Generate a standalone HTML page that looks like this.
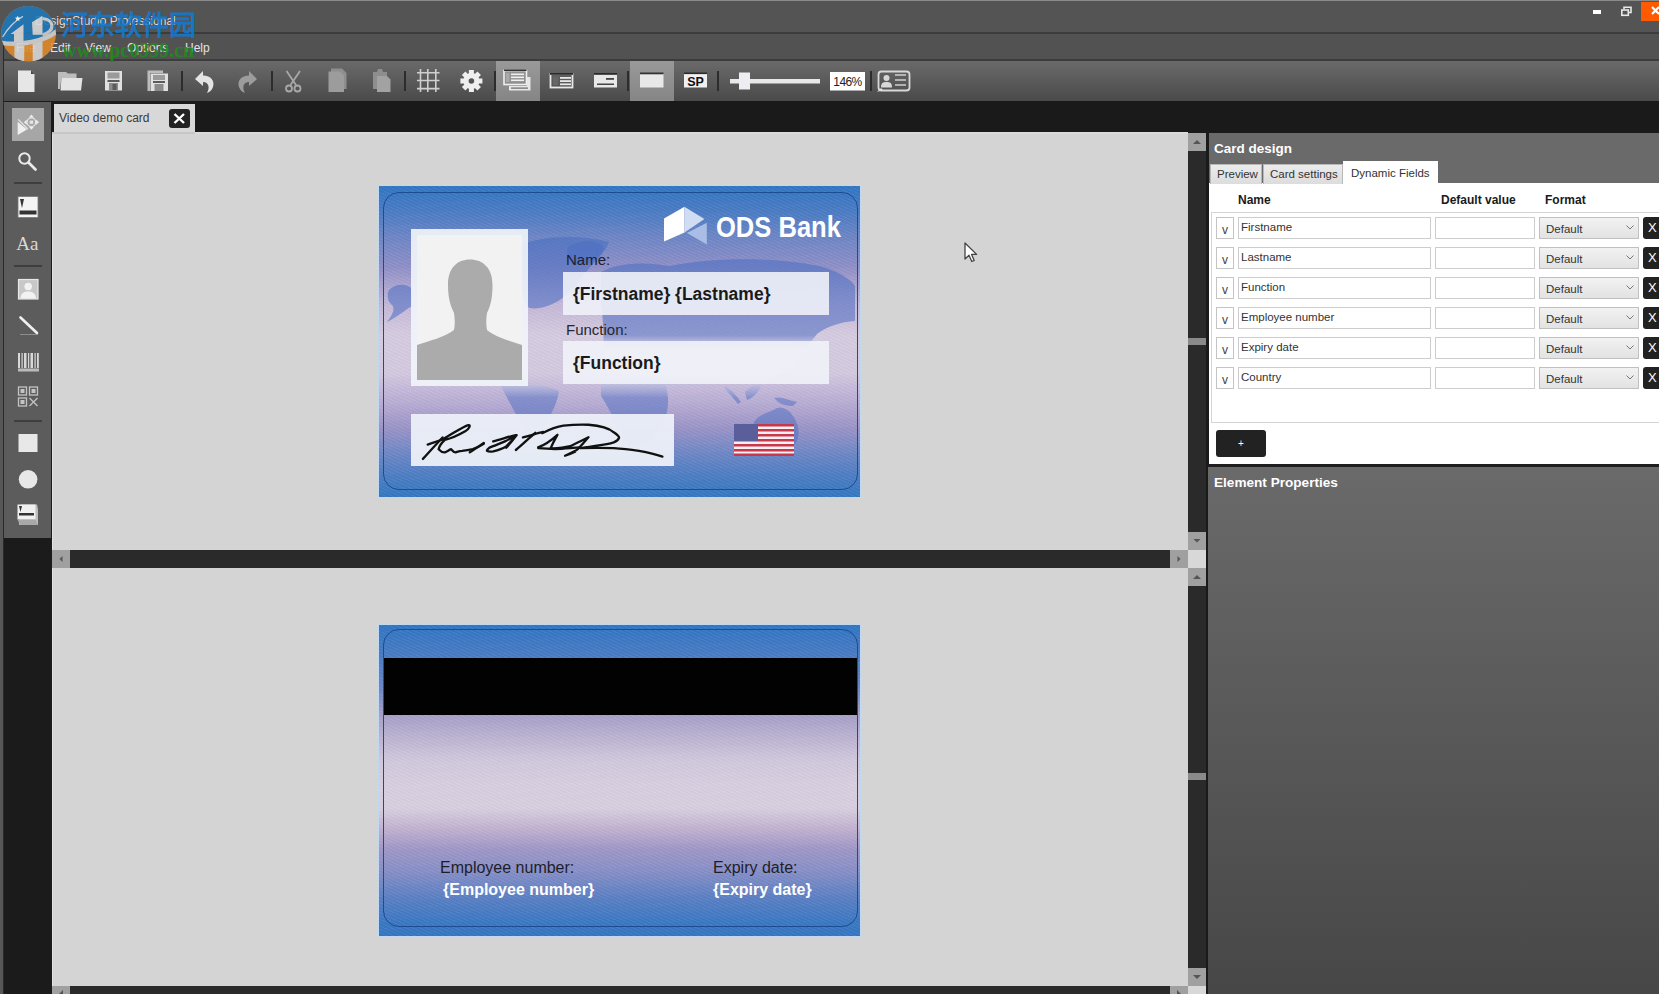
<!DOCTYPE html>
<html><head><meta charset="utf-8">
<style>
*{margin:0;padding:0;box-sizing:border-box}
html,body{width:1659px;height:994px;overflow:hidden;background:#1b1b1b;font-family:"Liberation Sans",sans-serif}
.a{position:absolute}
svg{position:absolute;overflow:visible}
#title{left:0;top:0;width:1659px;height:32px;background:#545454;border-top:1px solid #8a8a8a}
#menu{left:0;top:32px;width:1659px;height:29px;background:#525252;border-top:2px solid #3c3c3c;border-bottom:2px solid #3c3c3c}
#tb{left:0;top:61px;width:1659px;height:40px;background:linear-gradient(#6a6a6a,#4a4a4a)}
#tabs{left:0;top:101px;width:1659px;height:31px;background:#1a1a1a}
#lstrip{left:0;top:32px;width:3px;height:962px;background:#575757}
#ldark{left:3px;top:32px;width:1px;height:962px;background:#2a2a2a}
#tools{left:4px;top:102px;width:47px;height:436px;background:#5c5c5c}
.canvas{left:52px;width:1136px;background:#d4d4d4;border-left:1px solid #e2e2e2}
#canvas1{top:132px;height:418px;border-top:2px solid #dadada}
#canvas2{top:568px;height:418px}
#rp{left:1206px;top:133px;width:453px;height:861px;background:#1a1a1a}
.menuitem{top:40.7px;font-size:12px;color:#e4e4e4}
.sep{width:2px;height:20px;top:71px;background:#2c2c2c}
.sel{top:61px;height:40px;background:linear-gradient(#999,#858585)}
.hs{left:52px;width:1136px;height:19px;background:#2a2a2a}
.vs{left:1188px;width:18px;background:#2a2a2a}
.sbtn{background:#a0a0a0}
.tool{left:18px;width:20px;height:20px}
.tsep{left:14px;width:28px;height:2px;background:#3e3e3e}
</style></head><body>
<div id="title" class="a"></div>
<div id="menu" class="a"></div>
<div id="tb" class="a"></div>
<div id="tabs" class="a"></div>
<div id="lstrip" class="a"></div>
<div id="ldark" class="a"></div>
<div id="tools" class="a"></div>
<div id="canvas1" class="a canvas"></div>
<div id="canvas2" class="a canvas"></div>
<div id="rp" class="a"></div>

<!-- scrollbars -->
<div class="a hs" style="top:550px;height:18px"></div>
<div class="a sbtn" style="left:52px;top:550px;width:18px;height:18px"></div>
<div class="a sbtn" style="left:1170px;top:550px;width:18px;height:18px"></div>
<div class="a hs" style="top:986px;height:8px"></div>
<div class="a sbtn" style="left:52px;top:986px;width:18px;height:8px"></div>
<div class="a sbtn" style="left:1170px;top:986px;width:18px;height:8px"></div>
<div class="a" style="left:1188px;top:550px;width:18px;height:18px;background:#d8d8d8"></div>
<div class="a vs" style="top:133px;height:417px"></div>
<div class="a sbtn" style="left:1188px;top:133px;width:18px;height:18px"></div>
<div class="a sbtn" style="left:1188px;top:532px;width:18px;height:18px"></div>
<div class="a" style="left:1188px;top:338px;width:18px;height:7px;background:#8a8a8a"></div>
<div class="a vs" style="top:568px;height:418px"></div>
<div class="a sbtn" style="left:1188px;top:568px;width:18px;height:18px"></div>
<div class="a sbtn" style="left:1188px;top:968px;width:18px;height:18px"></div>
<div class="a" style="left:1188px;top:773px;width:18px;height:7px;background:#8a8a8a"></div>
<div class="a" style="left:1188px;top:986px;width:18px;height:8px;background:#d8d8d8"></div>
<svg style="left:0;top:0" width="1659" height="994">
 <g fill="#555">
  <path d="M1193 144 l4 -4 l4 4z"/>
  <path d="M1193.5 539 l3.5 3.5 l3.5 -3.5z"/>
  <path d="M1193 579 l4 -4 l4 4z"/>
  <path d="M1193 975 l4 4 l4 -4z"/>
  <path d="M62.5 556 l-3 3 l3 3z"/>
  <path d="M1177.5 556 l3 3 l-3 3z"/>
  <path d="M63 990 l-4 4 l4 4z"/>
  <path d="M1177 990 l4 4 l-4 4z"/>
 </g>
</svg>

<!-- menu -->
<div class="a menuitem" style="left:16px">File</div>
<div class="a menuitem" style="left:50px">Edit</div>
<div class="a menuitem" style="left:85px">View</div>
<div class="a menuitem" style="left:127px">Options</div>
<div class="a menuitem" style="left:185px">Help</div>

<!-- window controls -->
<div class="a" style="left:1593px;top:10px;width:8px;height:4px;background:#fff"></div>
<div class="a" style="left:1641px;top:2px;width:18px;height:19px;background:#ff5a00"></div>

<!-- toolbar separators / selected -->
<div class="a sel" style="left:496px;width:44px"></div>
<div class="a sel" style="left:630px;width:44px"></div>
<div class="a sep" style="left:181px"></div>
<div class="a sep" style="left:271px"></div>
<div class="a sep" style="left:404px"></div>
<div class="a sep" style="left:494px"></div>
<div class="a sep" style="left:627px"></div>
<div class="a sep" style="left:717px"></div>
<div class="a sep" style="left:870px"></div>

<!-- tab -->
<div class="a" style="left:54px;top:104px;width:141px;height:28px;background:#d8d8d8"></div>
<div class="a" style="left:52px;top:131.5px;width:143px;height:2.5px;background:#c6c6c6"></div>
<div class="a" style="left:59px;top:111px;font-size:12px;color:#3a3a3a">Video demo card</div>
<div class="a" style="left:169px;top:109px;width:21px;height:19px;background:#222;border-radius:3px"></div>

<!-- tool panel -->
<div class="a" style="left:12px;top:108px;width:32px;height:33px;background:#a6a6a6"></div>
<div class="a tsep" style="top:182px"></div>
<div class="a tsep" style="top:265px"></div>
<div class="a tsep" style="top:420px"></div>

<!-- right panel -->
<div class="a" style="left:1209px;top:133px;width:450px;height:50px;background:#6a6a6a"></div>
<div class="a" style="left:1214px;top:141px;font-size:13.5px;font-weight:bold;color:#fff">Card design</div>
<div class="a" style="left:1209px;top:183px;width:450px;height:281px;background:#fff"></div>
<div class="a" style="left:1208px;top:467px;width:451px;height:527px;background:linear-gradient(#6a6a6a,#474747)"></div>
<div class="a" style="left:1214px;top:475px;font-size:13.6px;font-weight:bold;color:#fff">Element Properties</div>





<!-- title text -->
<div class="a" style="left:35px;top:14px;font-size:12px;color:#dedede;white-space:nowrap">DesignStudio Professional</div>
<!-- watermark -->
<div lang="zh-CN" class="a" style="left:61px;top:3.5px;font-family:'Liberation Serif',serif;font-size:27px;font-weight:bold;color:rgba(20,120,205,0.92);white-space:nowrap;letter-spacing:0px">河东软件园</div>
<div class="a" style="left:62px;top:39px;font-family:'Liberation Serif',serif;font-size:20px;font-weight:bold;color:rgba(30,140,30,0.9);white-space:nowrap">www.pc0359.cn</div>
<svg style="left:0;top:0;opacity:0.9" width="60" height="64" viewBox="0 0 60 64">
 <defs><clipPath id="cc"><ellipse cx="28.6" cy="33.7" rx="27.4" ry="27.8"/></clipPath></defs>
 <g clip-path="url(#cc)">
  <rect x="0" y="0" width="60" height="64" fill="#e08a2a"/>
  <rect x="14.4" y="42" width="9.8" height="22" fill="#d6d6d6"/>
  <rect x="32.7" y="40" width="9.8" height="24" fill="#d6d6d6"/>
  <path d="M0 0 H60 V30.7 C45.8 40.5 19.6 45.8 0 41.9 Z" fill="#1e77b8"/>
  <path d="M0 42.5 C19.6 46.4 45.8 41 57 31" fill="none" stroke="#d2d2d2" stroke-width="4.5"/>
  <path d="M2.6 37 C8 28 16 20 23 16.3" fill="none" stroke="#c8d8e8" stroke-width="1.4"/>
  <path d="M10.5 34 L23.5 24.2 L23.5 41.9 L14 41.9 L14 34 Z" fill="#d8d8d8"/>
  <path d="M32 22.2 L42.5 15.7 L42.5 34.7 L32.7 34.7 Z" fill="#d8d8d8"/>
  <path d="M42.5 18.5 C55 19.8 55 31.5 42.5 34.7" fill="none" stroke="#cfcfcf" stroke-width="3.2"/>
  <path d="M17.7 15.8 l0.8 1.8 l2 0.2 l-1.5 1.3 l0.5 2 l-1.8 -1.1 l-1.8 1.1 l0.5 -2 l-1.5 -1.3 l2 -0.2z" fill="#fff"/>
 </g>
</svg>

<!-- toolbar icons -->
<svg style="left:0;top:0" width="1000" height="100">
 <!-- new -->
 <path d="M18 70.5 L31 70.5 L34.5 74 L34.5 92 L18 92z" fill="#e6e6e6"/>
 <path d="M31 70.5 L34.5 74 L31 74z" fill="#444"/>
 <!-- open -->
 <path d="M58 72 L66 72 L68 73.5 L76.5 73.5 L76.5 78 L61.5 78 L60 89 L58 89z" fill="#bdbdbd"/>
 <path d="M61.5 78 L82.5 78 L81 90.5 L60.5 90.5z" fill="#e4e4e4"/>
 <!-- save -->
 <path d="M105 71 L122 71 L122 90.5 L105 90.5z" fill="#e0e0e0"/>
 <rect x="107.5" y="72.5" width="12" height="6" fill="#9a9a9a"/>
 <rect x="107.5" y="80" width="12" height="2" fill="#5a5a5a"/>
 <rect x="109" y="83" width="9" height="7.5" fill="#8a8a8a"/>
 <rect x="112.5" y="84" width="4" height="6" fill="#5a5a5a"/>
 <!-- save all -->
 <path d="M147.5 70.5 L163 70.5 L163 73 L150 73 L150 91 L147.5 91z" fill="#bdbdbd"/>
 <path d="M150.5 73.5 L168 73.5 L168 91 L150.5 91z" fill="#e0e0e0"/>
 <rect x="153" y="75" width="12" height="5" fill="#9a9a9a"/>
 <rect x="153" y="81" width="12" height="2" fill="#5a5a5a"/>
 <rect x="154.5" y="84" width="9" height="7" fill="#8a8a8a"/>
 <!-- undo -->
 <path d="M195 79 L203 71 L203 75.5 C211 75.5 215 81 213 87 C212 90 210 92 207 93 C210 88 209 82 203 82 L203 86z" fill="#e4e4e4"/>
 <!-- redo -->
 <path d="M257 79 L249 71 L249 75.5 C241 75.5 237 81 239 87 C240 90 242 92 245 93 C242 88 243 82 249 82 L249 86z" fill="#9c9c9c"/>
 <!-- cut -->
 <g stroke="#a8a8a8" stroke-width="1.8" fill="none">
  <path d="M286.5 71 L296 85 M300 71 L290.5 85"/>
  <circle cx="289" cy="88.5" r="3"/>
  <circle cx="297.5" cy="88.5" r="3"/>
 </g>
 <!-- copy -->
 <path d="M331 68.5 L342 68.5 L346.5 73 L346.5 89 L331 89z" fill="#8e8e8e"/>
 <path d="M328.5 71.5 L340 71.5 L344 75.5 L344 92 L328.5 92z" fill="#9c9c9c"/>
 <!-- paste -->
 <path d="M373 72 L377 72 L378 69 L382 69 L383 72 L387 72 L387 89 L373 89z" fill="#8e8e8e"/>
 <path d="M377 76 L387 76 L390.5 79.5 L390.5 92 L377 92z" fill="#a2a2a2"/>
 <!-- grid -->
 <g stroke="#cfcfcf" stroke-width="1.6">
  <path d="M417 72.8 L439.5 72.8 M417 80.5 L439.5 80.5 M417 88.6 L439.5 88.6"/>
  <path d="M420.5 69 L420.5 92 M427.8 69 L427.8 92 M435.8 69 L435.8 92"/>
 </g>
 <!-- gear -->
 <g transform="translate(471.4 81)" fill="#efefef">
  <circle r="8"/>
  <g id="teeth"><rect x="-2.5" y="-11" width="5" height="22"/><rect x="-2.5" y="-11" width="5" height="22" transform="rotate(45)"/><rect x="-2.5" y="-11" width="5" height="22" transform="rotate(90)"/><rect x="-2.5" y="-11" width="5" height="22" transform="rotate(135)"/></g>
  <circle r="2.8" fill="#555"/>
 </g>
 <!-- layout icon 1 (selected) -->
 <rect x="504" y="70.5" width="22.5" height="14" fill="none" stroke="#efefef" stroke-width="1.6"/>
 <rect x="504" y="69.5" width="22.5" height="1.5" fill="#333"/>
 <rect x="506" y="73" width="3.5" height="9" fill="#aaa"/>
 <g fill="#efefef"><rect x="511" y="73.5" width="13" height="1.6"/><rect x="511" y="76.5" width="13" height="1.6"/><rect x="511" y="79.5" width="13" height="1.6"/></g>
 <path d="M509 86 L530.5 86 L530.5 90.5 L509 90.5z" fill="#e6e6e6"/>
 <rect x="511" y="87.5" width="17" height="1.2" fill="#666"/>
 <rect x="527" y="77" width="3.5" height="9" fill="#e6e6e6"/>
 <!-- layout icon 2 -->
 <rect x="550.5" y="74" width="22" height="13.5" fill="none" stroke="#e8e8e8" stroke-width="1.8"/>
 <rect x="550" y="73" width="23" height="1.8" fill="#2a2a2a"/>
 <rect x="553" y="77" width="5" height="8" fill="#666"/>
 <g fill="#e8e8e8"><rect x="560" y="77" width="11" height="1.8"/><rect x="560" y="80.2" width="11" height="1.8"/><rect x="560" y="83.4" width="11" height="1.8"/></g>
 <!-- layout icon 3 -->
 <rect x="594" y="74" width="23" height="13.5" fill="#e8e8e8"/>
 <rect x="594" y="73" width="23" height="1.8" fill="#2a2a2a"/>
 <rect x="606" y="78" width="8" height="1.8" fill="#444"/>
 <rect x="597" y="83.5" width="17" height="1.5" fill="#444"/>
 <!-- layout icon 4 (selected) -->
 <rect x="640" y="73.5" width="23.5" height="14" fill="#e8e8e8"/>
 <rect x="640" y="72.5" width="23.5" height="1.8" fill="#333"/>
 <!-- SP -->
 <rect x="684" y="73.5" width="23" height="14" fill="#f0f0f0"/>
 <rect x="684" y="72.5" width="23" height="1.6" fill="#2a2a2a"/>
 <text x="695.5" y="86" font-family="Liberation Sans" font-weight="bold" font-size="12.5" fill="#111" text-anchor="middle">SP</text>
 <!-- slider -->
 <rect x="730" y="79" width="90" height="4.5" fill="#e8e8e8"/>
 <rect x="739" y="72.5" width="11" height="17" fill="#ededf2"/>
 <!-- zoom box -->
 <rect x="830" y="72" width="35" height="18.5" fill="#fff"/>
 <text x="847.5" y="86.2" font-family="Liberation Sans" font-size="12" fill="#222" text-anchor="middle" letter-spacing="-0.6">146%</text>
 <!-- last icon -->
 <rect x="878.5" y="71.5" width="31" height="19" rx="3" fill="none" stroke="#d8d8d8" stroke-width="1.8"/>
 <circle cx="886.5" cy="78" r="3" fill="#d8d8d8"/>
 <path d="M881 87.5 C881 83 883 82 886.5 82 C890 82 892 83 892 87.5z" fill="#d8d8d8"/>
 <g stroke="#cfcfcf" stroke-width="1.5"><path d="M895 75 L906 75 M895 80 L906 80 M895 85 L906 85"/></g>
 <path d="M877 92 L881 88 L883 90z" fill="#e0e0e0"/>
 <!-- window restore -->
 <g fill="none" stroke="#e8e8e8" stroke-width="1.6"><rect x="1621.8" y="10" width="6.5" height="5.3"/><path d="M1624 9 L1624 7.2 L1631 7.2 L1631 12.5 L1629 12.5"/></g>
 <!-- close X -->
 <path d="M1652 7 L1659 14 M1659 7 L1652 14" stroke="#fff" stroke-width="2.2"/>
 <!-- tab close X -->
 <path d="M174.5 114 L184 123 M184 114 L174.5 123" stroke="#fff" stroke-width="2.4"/>
</svg>

<!-- left tool icons -->
<svg style="left:0;top:0" width="60" height="540">
 <!-- select tool -->
 <path d="M17.7 121.8 L17.7 135.1 L27 129.4z" fill="#f0f0f0"/>
 <path d="M18.1 119.4 L27.8 129" stroke="#e8e8e8" stroke-width="1.2"/>
 <g fill="#ececec">
  <path d="M31.4 114.6 L34 117.6 L28.8 117.6z"/>
  <path d="M31.4 129.8 L34 126.8 L28.8 126.8z"/>
  <path d="M23.8 122.2 L26.8 119.6 L26.8 124.8z"/>
  <path d="M39 122.2 L36 119.6 L36 124.8z"/>
 </g>
 <circle cx="31.4" cy="122.2" r="4.3" fill="none" stroke="#e6e6e6" stroke-width="1.2"/>
 <rect x="29.6" y="120.6" width="3.6" height="3.2" fill="#e6e6e6"/>
 <!-- zoom -->
 <circle cx="24.5" cy="158.5" r="5.2" fill="none" stroke="#eaeaea" stroke-width="2"/>
 <path d="M28.5 162.5 L35.5 169.5" stroke="#eaeaea" stroke-width="2.8" stroke-linecap="round"/>
 <!-- image icon -->
 <rect x="18" y="196.5" width="20" height="21" fill="#f4f4f4" stroke="#777" stroke-width="0.8"/>
 <path d="M20 199 L24 199 L22 208z" fill="#333"/>
 <rect x="19.5" y="210.5" width="17" height="4" fill="#333"/>
 <!-- Aa -->
 <text x="16.3" y="250.4" font-family="Liberation Serif" font-size="19" fill="#d8d8d8">Aa</text>
 <!-- person -->
 <rect x="18.5" y="279.5" width="19.5" height="19.5" fill="#c8c8c8" stroke="#e8e8e8" stroke-width="1.2"/>
 <circle cx="28.2" cy="286.5" r="3.8" fill="#f2f2f2"/>
 <path d="M20.5 298.5 C21 293 24 291.5 28.2 291.5 C32.5 291.5 35.5 293 36 298.5z" fill="#f2f2f2"/>
 <!-- line -->
 <path d="M20.5 317.5 L37 333" stroke="#f0f0f0" stroke-width="2.6" stroke-linecap="round"/>
 <path d="M20 334.5 L38 334.5" stroke="#9a9a9a" stroke-width="0.8"/>
 <!-- barcode -->
 <g fill="#d8d8d8"><rect x="18" y="353" width="2" height="15"/><rect x="21.5" y="353" width="1.2" height="15"/><rect x="24" y="353" width="2.5" height="15"/><rect x="28" y="353" width="1.2" height="15"/><rect x="30.5" y="353" width="2.5" height="15"/><rect x="34.5" y="353" width="1.2" height="15"/><rect x="37" y="353" width="1.8" height="15"/></g>
 <rect x="18" y="368.5" width="21" height="3" fill="#bbb"/>
 <!-- QR -->
 <g fill="none" stroke="#c4c4c4" stroke-width="1.3"><rect x="18.5" y="387" width="8" height="8"/><rect x="29.5" y="387" width="8" height="8"/><rect x="18.5" y="398" width="8" height="8"/><path d="M29.5 398 L37.5 406 M37.5 398 L29.5 406"/></g>
 <g fill="#c4c4c4"><rect x="20.5" y="389" width="4" height="4"/><rect x="31.5" y="389" width="4" height="4"/><rect x="20.5" y="400" width="4" height="4"/></g>
 <!-- square -->
 <rect x="18.5" y="434" width="19" height="18" fill="#e8e8e8"/>
 <!-- circle -->
 <circle cx="28.1" cy="479.3" r="9.3" fill="#e8e8e8"/>
 <!-- stacked image -->
 <path d="M19 509 L21 504.5 L37 504.5 L38 509 L38 525 L19 525z" fill="#bdbdbd"/>
 <rect x="17.5" y="504.5" width="18" height="15" fill="#f0f0f0"/>
 <path d="M19 506 L22 506 L20.5 512z" fill="#333"/>
 <rect x="19" y="513" width="15" height="2.5" fill="#333"/>
 <path d="M17.5 519.5 L35.5 519.5 L38 525 L20 525z" fill="#a8a8a8"/>
</svg>

<!-- right panel content -->
<style>
.rtab{top:164px;height:20px;background:linear-gradient(#ececec,#dcdcdc);border:1px solid #b8b8b8;border-bottom:none;font-size:11.5px;color:#333;padding:3.3px 0 0 6px;white-space:nowrap}
.hdr{top:193px;font-size:12px;font-weight:bold;color:#1a1a1a}
.vbox{left:1216px;width:18px;height:22px;border:1.5px solid #c4c4c4;background:#fff;font-size:12px;color:#444;text-align:center;line-height:22px;padding-top:1px}
.inp{height:22px;border:1.5px solid #cdcdcd;background:#fff;font-size:11.5px;color:#333;white-space:nowrap}
.inp span{position:absolute;left:2px;top:3px}
.dd{left:1539px;width:100px;height:22px;border:1px solid #c0c0c0;background:linear-gradient(#f2f2f2,#e2e2e2);font-size:11.5px;color:#333}
.dd span{position:absolute;left:6px;top:5px}
.xb{left:1643px;width:20px;height:22px;background:#222;border-radius:3px;color:#fff;font-size:13px;padding-left:5px;line-height:22px}
</style>
<div class="a rtab" style="left:1210px;width:52px">Preview</div>
<div class="a rtab" style="left:1263px;width:80px">Card settings</div>
<div class="a" style="left:1343px;top:161px;width:95px;height:23px;background:#fff;font-size:11.5px;color:#333;padding:6px 0 0 8px;white-space:nowrap">Dynamic Fields</div>
<div class="a hdr" style="left:1238px">Name</div>
<div class="a hdr" style="left:1441px">Default value</div>
<div class="a hdr" style="left:1545px">Format</div>
<div class="a" style="left:1211px;top:212px;width:460px;height:211px;border:1.5px solid #d4d4d4"></div>
<div class="a vbox" style="top:217px">v</div>
<div class="a inp" style="left:1238px;top:217px;width:193px"><span>Firstname</span></div>
<div class="a inp" style="left:1435px;top:217px;width:100px"></div>
<div class="a dd" style="top:217px"><span>Default</span></div>
<svg style="left:1626px;top:225px" width="8" height="5"><path d="M0.5 0.5 L4 4 L7.5 0.5" fill="none" stroke="#777" stroke-width="1"/></svg>
<div class="a xb" style="top:217px">X</div>
<div class="a vbox" style="top:247px">v</div>
<div class="a inp" style="left:1238px;top:247px;width:193px"><span>Lastname</span></div>
<div class="a inp" style="left:1435px;top:247px;width:100px"></div>
<div class="a dd" style="top:247px"><span>Default</span></div>
<svg style="left:1626px;top:255px" width="8" height="5"><path d="M0.5 0.5 L4 4 L7.5 0.5" fill="none" stroke="#777" stroke-width="1"/></svg>
<div class="a xb" style="top:247px">X</div>
<div class="a vbox" style="top:277px">v</div>
<div class="a inp" style="left:1238px;top:277px;width:193px"><span>Function</span></div>
<div class="a inp" style="left:1435px;top:277px;width:100px"></div>
<div class="a dd" style="top:277px"><span>Default</span></div>
<svg style="left:1626px;top:285px" width="8" height="5"><path d="M0.5 0.5 L4 4 L7.5 0.5" fill="none" stroke="#777" stroke-width="1"/></svg>
<div class="a xb" style="top:277px">X</div>
<div class="a vbox" style="top:307px">v</div>
<div class="a inp" style="left:1238px;top:307px;width:193px"><span>Employee number</span></div>
<div class="a inp" style="left:1435px;top:307px;width:100px"></div>
<div class="a dd" style="top:307px"><span>Default</span></div>
<svg style="left:1626px;top:315px" width="8" height="5"><path d="M0.5 0.5 L4 4 L7.5 0.5" fill="none" stroke="#777" stroke-width="1"/></svg>
<div class="a xb" style="top:307px">X</div>
<div class="a vbox" style="top:337px">v</div>
<div class="a inp" style="left:1238px;top:337px;width:193px"><span>Expiry date</span></div>
<div class="a inp" style="left:1435px;top:337px;width:100px"></div>
<div class="a dd" style="top:337px"><span>Default</span></div>
<svg style="left:1626px;top:345px" width="8" height="5"><path d="M0.5 0.5 L4 4 L7.5 0.5" fill="none" stroke="#777" stroke-width="1"/></svg>
<div class="a xb" style="top:337px">X</div>
<div class="a vbox" style="top:367px">v</div>
<div class="a inp" style="left:1238px;top:367px;width:193px"><span>Country</span></div>
<div class="a inp" style="left:1435px;top:367px;width:100px"></div>
<div class="a dd" style="top:367px"><span>Default</span></div>
<svg style="left:1626px;top:375px" width="8" height="5"><path d="M0.5 0.5 L4 4 L7.5 0.5" fill="none" stroke="#777" stroke-width="1"/></svg>
<div class="a xb" style="top:367px">X</div>

<div class="a" style="left:1216px;top:430px;width:50px;height:27px;background:#222;border-radius:3px;color:#fff;font-size:10px;text-align:center;line-height:27px">+</div>
<div class="a" style="left:1208px;top:464px;width:451px;height:3px;background:#1e1e1e"></div>

<!-- FRONT CARD -->
<div class="a" style="left:378px;top:185px;width:483px;height:313px;background:#c0d8f0"></div>
<div class="a" id="front" style="left:379px;top:186px;width:481px;height:311px;overflow:hidden;background:linear-gradient(#3276c4 0%,#4a7cc4 8%,#6c86c6 16%,#9090c8 26%,#c4b8d8 38%,#d6cce0 48%,#d4cae0 60%,#b8acd4 70%,#9a94c8 78%,#6e88c6 86%,#4e7ec4 93%,#3478c2 100%)">
 <div class="a" style="left:0;top:0;width:481px;height:311px;background:repeating-linear-gradient(25deg,rgba(255,255,255,0.05) 0 1px,rgba(0,0,0,0.02) 1px 3px)"></div>
 <svg style="left:0;top:0" width="481" height="311" viewBox="0 0 481 311">
  <defs>
   <linearGradient id="mapg" gradientUnits="userSpaceOnUse" x1="0" y1="0" x2="0" y2="311">
    <stop offset="0" stop-color="#3f6cc0" stop-opacity="0.6"/>
    <stop offset="0.48" stop-color="#5a74c4" stop-opacity="0.6"/>
    <stop offset="0.54" stop-color="#ffffff" stop-opacity="0.35"/>
    <stop offset="0.6" stop-color="#ffffff" stop-opacity="0.3"/>
    <stop offset="0.68" stop-color="#5a74c4" stop-opacity="0.55"/>
    <stop offset="1" stop-color="#3f6cc0" stop-opacity="0.6"/>
   </linearGradient>
  </defs>
  <g fill="url(#mapg)">
   <path d="M10 104 C16 98 26 97 32 102 L33 120 C26 124 20 130 8 136 C14 128 17 122 12 118 C8 114 8 108 10 104Z"/>
   <path d="M140 60 C160 50 200 48 230 56 C225 70 210 80 200 95 C190 110 170 125 150 122 C140 110 138 80 140 60Z"/>
   <path d="M190 60 C205 52 222 55 225 62 C220 75 205 82 195 78 C188 72 186 66 190 60Z"/>
   <path d="M222 86 C240 76 270 76 290 80 C330 72 390 70 440 80 C460 85 474 95 476 100 L476 135 C462 136 448 140 438 148 C428 160 420 175 405 185 C390 195 370 195 350 196 C330 198 300 200 280 198 C260 196 240 190 230 180 C222 165 226 140 222 120 Z"/>
   <path d="M222 196 C240 192 265 192 285 196 C292 210 290 230 280 245 C270 258 258 262 250 260 C240 245 232 225 222 210 Z"/>
   <path d="M122 200 C140 196 165 198 180 205 C178 220 168 238 155 250 C145 245 135 225 122 200Z"/>
   <path d="M347 200 C352 204 358 210 362 216 L359 218 C354 212 349 206 345 202Z M366 206 C372 200 378 197 382 200 C380 206 374 212 368 214Z M395 212 C402 210 410 214 418 216 L414 220 C406 220 400 218 395 212Z"/>
   <path d="M375 236 C380 228 392 226 398 222 C404 220 410 224 414 230 C420 238 422 250 416 258 C408 266 396 264 388 258 C380 256 374 250 375 236Z"/>
  </g>
 </svg>
 <!-- inner rounded border -->
 <div class="a" style="left:4px;top:6px;width:475px;height:298px;border:1.7px solid #1d4c90;border-radius:16px"></div>
 <!-- photo frame -->
 <div class="a" style="left:32px;top:43px;width:117px;height:157px;background:rgba(240,244,250,0.92)"></div>
 <div class="a" style="left:38px;top:49px;width:105px;height:145px;background:#f2f2f2"></div>
 <svg style="left:38px;top:49px" width="105" height="145" viewBox="0 0 105 145">
  <path fill="#ababab" d="M53 24.5 C40 24.5 31 33 31 50 C31 62 33 70 37 78 C38 84 38 90 37 95 C28 102 12 106 0 110 L0 145 L105 145 L105 110 C93 106 78 102 70 95 C69 90 69 84 70 78 C74 70 75.5 62 75.5 50 C75.5 33 66 24.5 53 24.5z"/>
 </svg>
 <!-- logo -->
 <svg style="left:0;top:0" width="481" height="311" viewBox="0 0 481 311">
  <path fill="#ffffff" d="M285 32.5 L305.5 20.7 L305.5 46.4 L285 55.4z"/>
  <path fill="#d0dcf2" d="M305.5 20.7 L325.4 33.1 L305.5 46.4z"/>
  <path fill="#a9bde6" d="M307.9 47 L327.8 36.7 L327.8 58.4z"/>
 </svg>
 <div class="a" style="left:336.5px;top:24px;font-size:29.3px;font-weight:bold;color:#fff;transform:scaleX(0.872);transform-origin:0 0;white-space:nowrap">ODS Bank</div>
 <!-- name -->
 <div class="a" style="left:187px;top:65.4px;font-size:15px;color:#1c2030">Name:</div>
 <div class="a" style="left:184px;top:86px;width:266px;height:43px;background:rgba(240,242,248,0.9)"></div>
 <div class="a" style="left:194px;top:98.4px;font-size:17.5px;font-weight:bold;color:#1a1a1a;white-space:nowrap">{Firstname} {Lastname}</div>
 <div class="a" style="left:187px;top:134.8px;font-size:15px;color:#262630">Function:</div>
 <div class="a" style="left:184px;top:155px;width:266px;height:43px;background:rgba(240,242,248,0.9)"></div>
 <div class="a" style="left:194px;top:167.4px;font-size:17.5px;font-weight:bold;color:#1a1a1a;white-space:nowrap">{Function}</div>
 <!-- signature box -->
 <div class="a" style="left:32px;top:228px;width:263px;height:52px;background:rgba(236,240,248,0.95)"></div>
 <svg style="left:32px;top:228px" width="263" height="52" viewBox="38 35 1587 315">
  <g fill="none" stroke="#111" stroke-width="14" stroke-linecap="round" stroke-linejoin="round">
   <path d="M107 307 C150 260 190 215 226 177"/>
   <path d="M136 220 C165 210 195 200 221 191 C280 160 350 110 382 102 C398 100 392 120 363 140 C320 165 270 185 240 192 C215 215 205 235 202 248 C215 262 228 268 240 267 C255 262 265 252 278 248 C290 262 298 268 306 267 C322 262 332 258 344 258 C370 256 392 252 410 248 C435 238 455 228 476 215"/>
   <path d="M391 267 C420 250 450 228 476 210"/>
   <path d="M533 201 C580 190 630 170 670 163 C650 175 630 190 604 201 C570 215 530 230 510 239 C498 248 494 255 495 258 C505 265 520 264 533 262 C560 255 590 245 609 234 C630 215 655 185 675 163 C655 190 630 220 612 239"/>
   <path d="M670 253 C710 220 750 180 788 149"/>
   <path d="M713 177 C760 165 800 152 836 144"/>
   <path d="M805 237 C850 220 890 190 922 161 C905 190 890 220 881 242 C930 246 960 240 1000 230 C1040 210 1080 190 1110 176 C1080 210 1060 235 1039 253 C1010 268 980 282 968 288 C985 282 1010 272 1029 263"/>
   <path d="M806 242 C840 245 880 247 907 247 C960 245 1010 240 1060 237"/>
   <path d="M830 151 C870 130 920 110 958 105 C1010 100 1060 98 1110 100 C1180 105 1240 125 1263 146 C1285 160 1300 175 1294 181 C1290 195 1280 200 1263 207 C1230 218 1200 222 1161 227 C1120 233 1090 238 1060 242 C1130 240 1200 240 1263 242 C1320 246 1370 252 1416 258 C1470 268 1520 280 1558 293"/>
  </g>
 </svg>
 <!-- flag -->
 <svg style="left:355px;top:238px" width="60" height="32" viewBox="0 0 60 32">
  <rect width="60" height="32" fill="#f4f0f4"/>
  <g fill="#c8374a"><rect y="0" width="60" height="2.5"/><rect y="5" width="60" height="2.5"/><rect y="10" width="60" height="2.5"/><rect y="15" width="60" height="2.5"/><rect y="20" width="60" height="2.5"/><rect y="25" width="60" height="2.5"/><rect y="29.5" width="60" height="2.5"/></g>
  <rect width="24" height="17" fill="#5a5e9a"/>
 </svg>
</div>

<!-- BACK CARD -->
<div class="a" style="left:378px;top:624px;width:483px;height:313px;background:#c0d8f0"></div>
<div class="a" id="back" style="left:379px;top:625px;width:481px;height:311px;overflow:hidden;background:linear-gradient(#3276c4 0%,#4a7cc4 10%,#6a86c6 20%,#a8a0c8 29%,#d0c8dc 43%,#d8d0e0 51%,#d8d0e0 59%,#c0b0d0 66%,#a098c8 72%,#8890c8 79%,#5a80c4 88%,#3a78c4 96%,#3676c2 100%)">
 <div class="a" style="left:0;top:0;width:481px;height:311px;background:repeating-linear-gradient(25deg,rgba(255,255,255,0.05) 0 1px,rgba(0,0,0,0.02) 1px 3px)"></div>
 <div class="a" style="left:4px;top:33px;width:474px;height:57px;background:#020202"></div>
 <div class="a" style="left:4px;top:4px;width:475px;height:298px;border:1.7px solid #1d4c90;border-radius:16px"></div>
 <div class="a" style="left:61px;top:234px;font-size:16px;color:#1e1e2a;white-space:nowrap">Employee number:</div>
 <div class="a" style="left:64px;top:256px;font-size:16px;font-weight:bold;color:#fff;white-space:nowrap">{Employee number}</div>
 <div class="a" style="left:334px;top:234px;font-size:16px;color:#1e1e2a;white-space:nowrap">Expiry date:</div>
 <div class="a" style="left:334px;top:256px;font-size:16px;font-weight:bold;color:#fff;white-space:nowrap">{Expiry date}</div>
</div>

<!-- cursor -->
<svg style="left:964px;top:242px" width="16" height="22" viewBox="0 0 16 22">
 <path d="M1 1 L1 17 L5 13.2 L7.8 19.5 L10.2 18.4 L7.6 12.4 L12.6 12.4 Z" fill="#fff" stroke="#444" stroke-width="1.3" stroke-linejoin="round"/>
</svg>
</body></html>
